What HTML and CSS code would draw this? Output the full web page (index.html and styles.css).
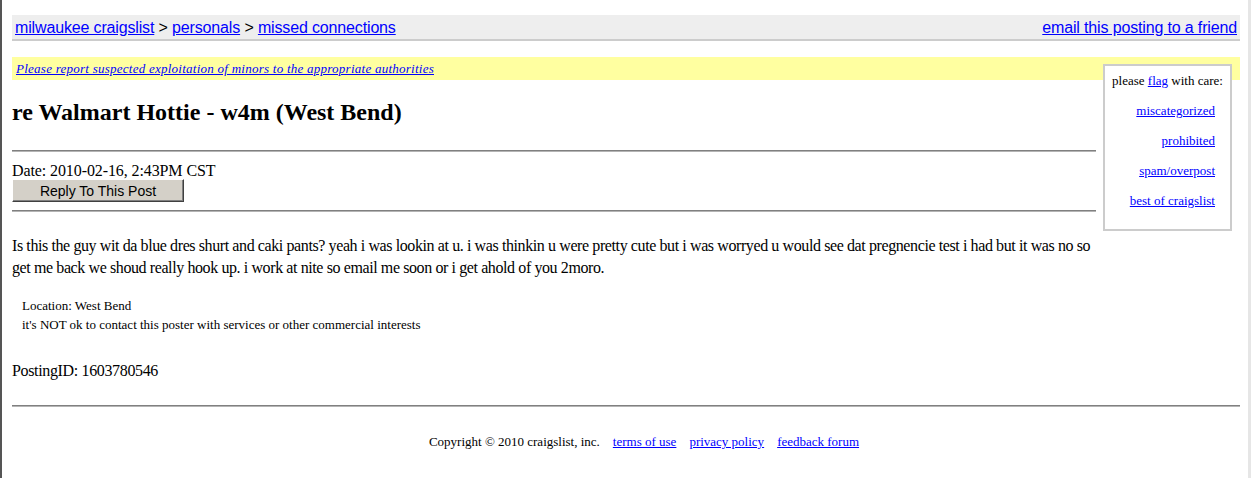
FILE: index.html
```
<!DOCTYPE html>
<html lang="en">
<head>
    <meta charset="UTF-8">
    <title>re Walmart Hottie - w4m (West Bend)</title>
    <link rel="stylesheet" href="styles.css">
</head>
<body>

<div class="bchead">
    <span>
        <a href="#">milwaukee craigslist</a> &gt;
        <a href="#">personals</a> &gt;
        <a href="#">missed connections</a>
    </span>
    <a href="#">email this posting to a friend</a>
</div>

<!-- flag box floats beside the posting -->
<div class="flags">
    <div class="flag-title">please <a href="#">flag</a> with care:</div>
    <div class="flag-link"><a href="#">miscategorized</a></div>
    <div class="flag-link"><a href="#">prohibited</a></div>
    <div class="flag-link"><a href="#">spam/overpost</a></div>
    <div class="flag-link"><a href="#">best of craigslist</a></div>
</div>

<div class="tsb"><em><a href="#">Please report suspected exploitation of minors to the appropriate authorities</a></em></div>

<div class="posting">
    <h2>re Walmart Hottie - w4m (West Bend)</h2>
    <hr>
    <div class="date">Date: 2010-02-16, 2:43PM CST</div>
    <button class="reply">Reply To This Post</button>
    <hr class="after-reply">

    <div class="userbody">Is this the guy wit da blue dres shurt and caki pants? yeah i was lookin at u. i was thinkin u were pretty cute but i was worryed u would see dat pregnencie test i had but it was no so get me back we shoud really hook up. i work at nite so email me soon or i get ahold of you 2moro.</div>

    <ul class="blurbs">
        <li>Location: West Bend</li>
        <li>it's NOT ok to contact this poster with services or other commercial interests</li>
    </ul>

    <div class="posting-id">PostingID: 1603780546</div>
</div>

<hr class="footer-rule">

<div class="footer">
    <span>Copyright &copy; 2010 craigslist, inc.</span>
    <a href="#">terms of use</a>
    <a href="#">privacy policy</a>
    <a href="#">feedback forum</a>
</div>

</body>
</html>
```

FILE: styles.css
```
html {
    min-height: 100%;
    box-sizing: border-box;
    border-left: 2px solid #555;
    border-right: 3px solid #e6e6e6;
    background-color: #fff;
}

body {
    font-family: 'Liberation Serif', 'Times New Roman', serif;
    font-size: 16px;
    color: #000;
    margin: 15px 8px 0 10px;
}

a {
    color: #0000ff;
}

.bchead {
    display: flex;
    justify-content: space-between;
    height: 24px;
    line-height: 26px;
    padding: 0 3px;
    background-color: #eee;
    border-bottom: 2px solid #ccc;
    font-family: 'Liberation Sans', Arial, sans-serif;
    font-size: 16px;
    letter-spacing: -0.15px;
}

.flags {
    float: right;
    width: 125px;
    margin: 23px 8px 0 7px;
    padding-bottom: 13px;
    border: 2px solid #ccc;
    background-color: #fff;
    font-size: 13px;
}

.flag-title {
    line-height: 30px;
    text-align: center;
}

.flag-link {
    line-height: 30px;
    text-align: right;
    padding-right: 15px;
}

.tsb {
    margin-top: 16px;
    height: 23px;
    line-height: 23px;
    padding-left: 4px;
    background-color: #ffffa0;
    font-size: 13px;
    letter-spacing: 0.25px;
}

.posting {
    overflow: hidden;
}

h2 {
    font-size: 24px;
    line-height: 27px;
    margin: 19px 0 24px;
}

hr {
    height: 0;
    margin: 0;
    border: none;
    border-top: 1px solid #808080;
    border-bottom: 1px solid #b4b4b4;
}

.date {
    margin-top: 10px;
    line-height: 17px;
    letter-spacing: -0.1px;
}

.reply {
    display: block;
    width: 172px;
    height: 23px;
    margin: 0;
    padding: 0;
    background-color: #d4d0c8;
    border: 1px solid;
    border-color: #fff #404040 #404040 #fff;
    box-shadow: inset -1px -1px #808080;
    font-family: 'Liberation Sans', Arial, sans-serif;
    font-size: 14px;
    color: #000;
}

.after-reply {
    margin-top: 8px;
}

.userbody {
    margin-top: 23px;
    line-height: 22px;
    letter-spacing: -0.4px;
}

.blurbs {
    list-style: none;
    margin: 17px 0 0;
    padding-left: 10px;
    font-size: 13px;
    line-height: 19px;
}

.posting-id {
    margin-top: 28px;
    line-height: 18px;
    letter-spacing: -0.35px;
}

.footer-rule {
    clear: both;
    margin-top: 25px;
}

.footer {
    display: flex;
    justify-content: center;
    gap: 13px;
    padding: 27px 0 0 36px;
    font-size: 13px;
    line-height: 15px;
}
```
